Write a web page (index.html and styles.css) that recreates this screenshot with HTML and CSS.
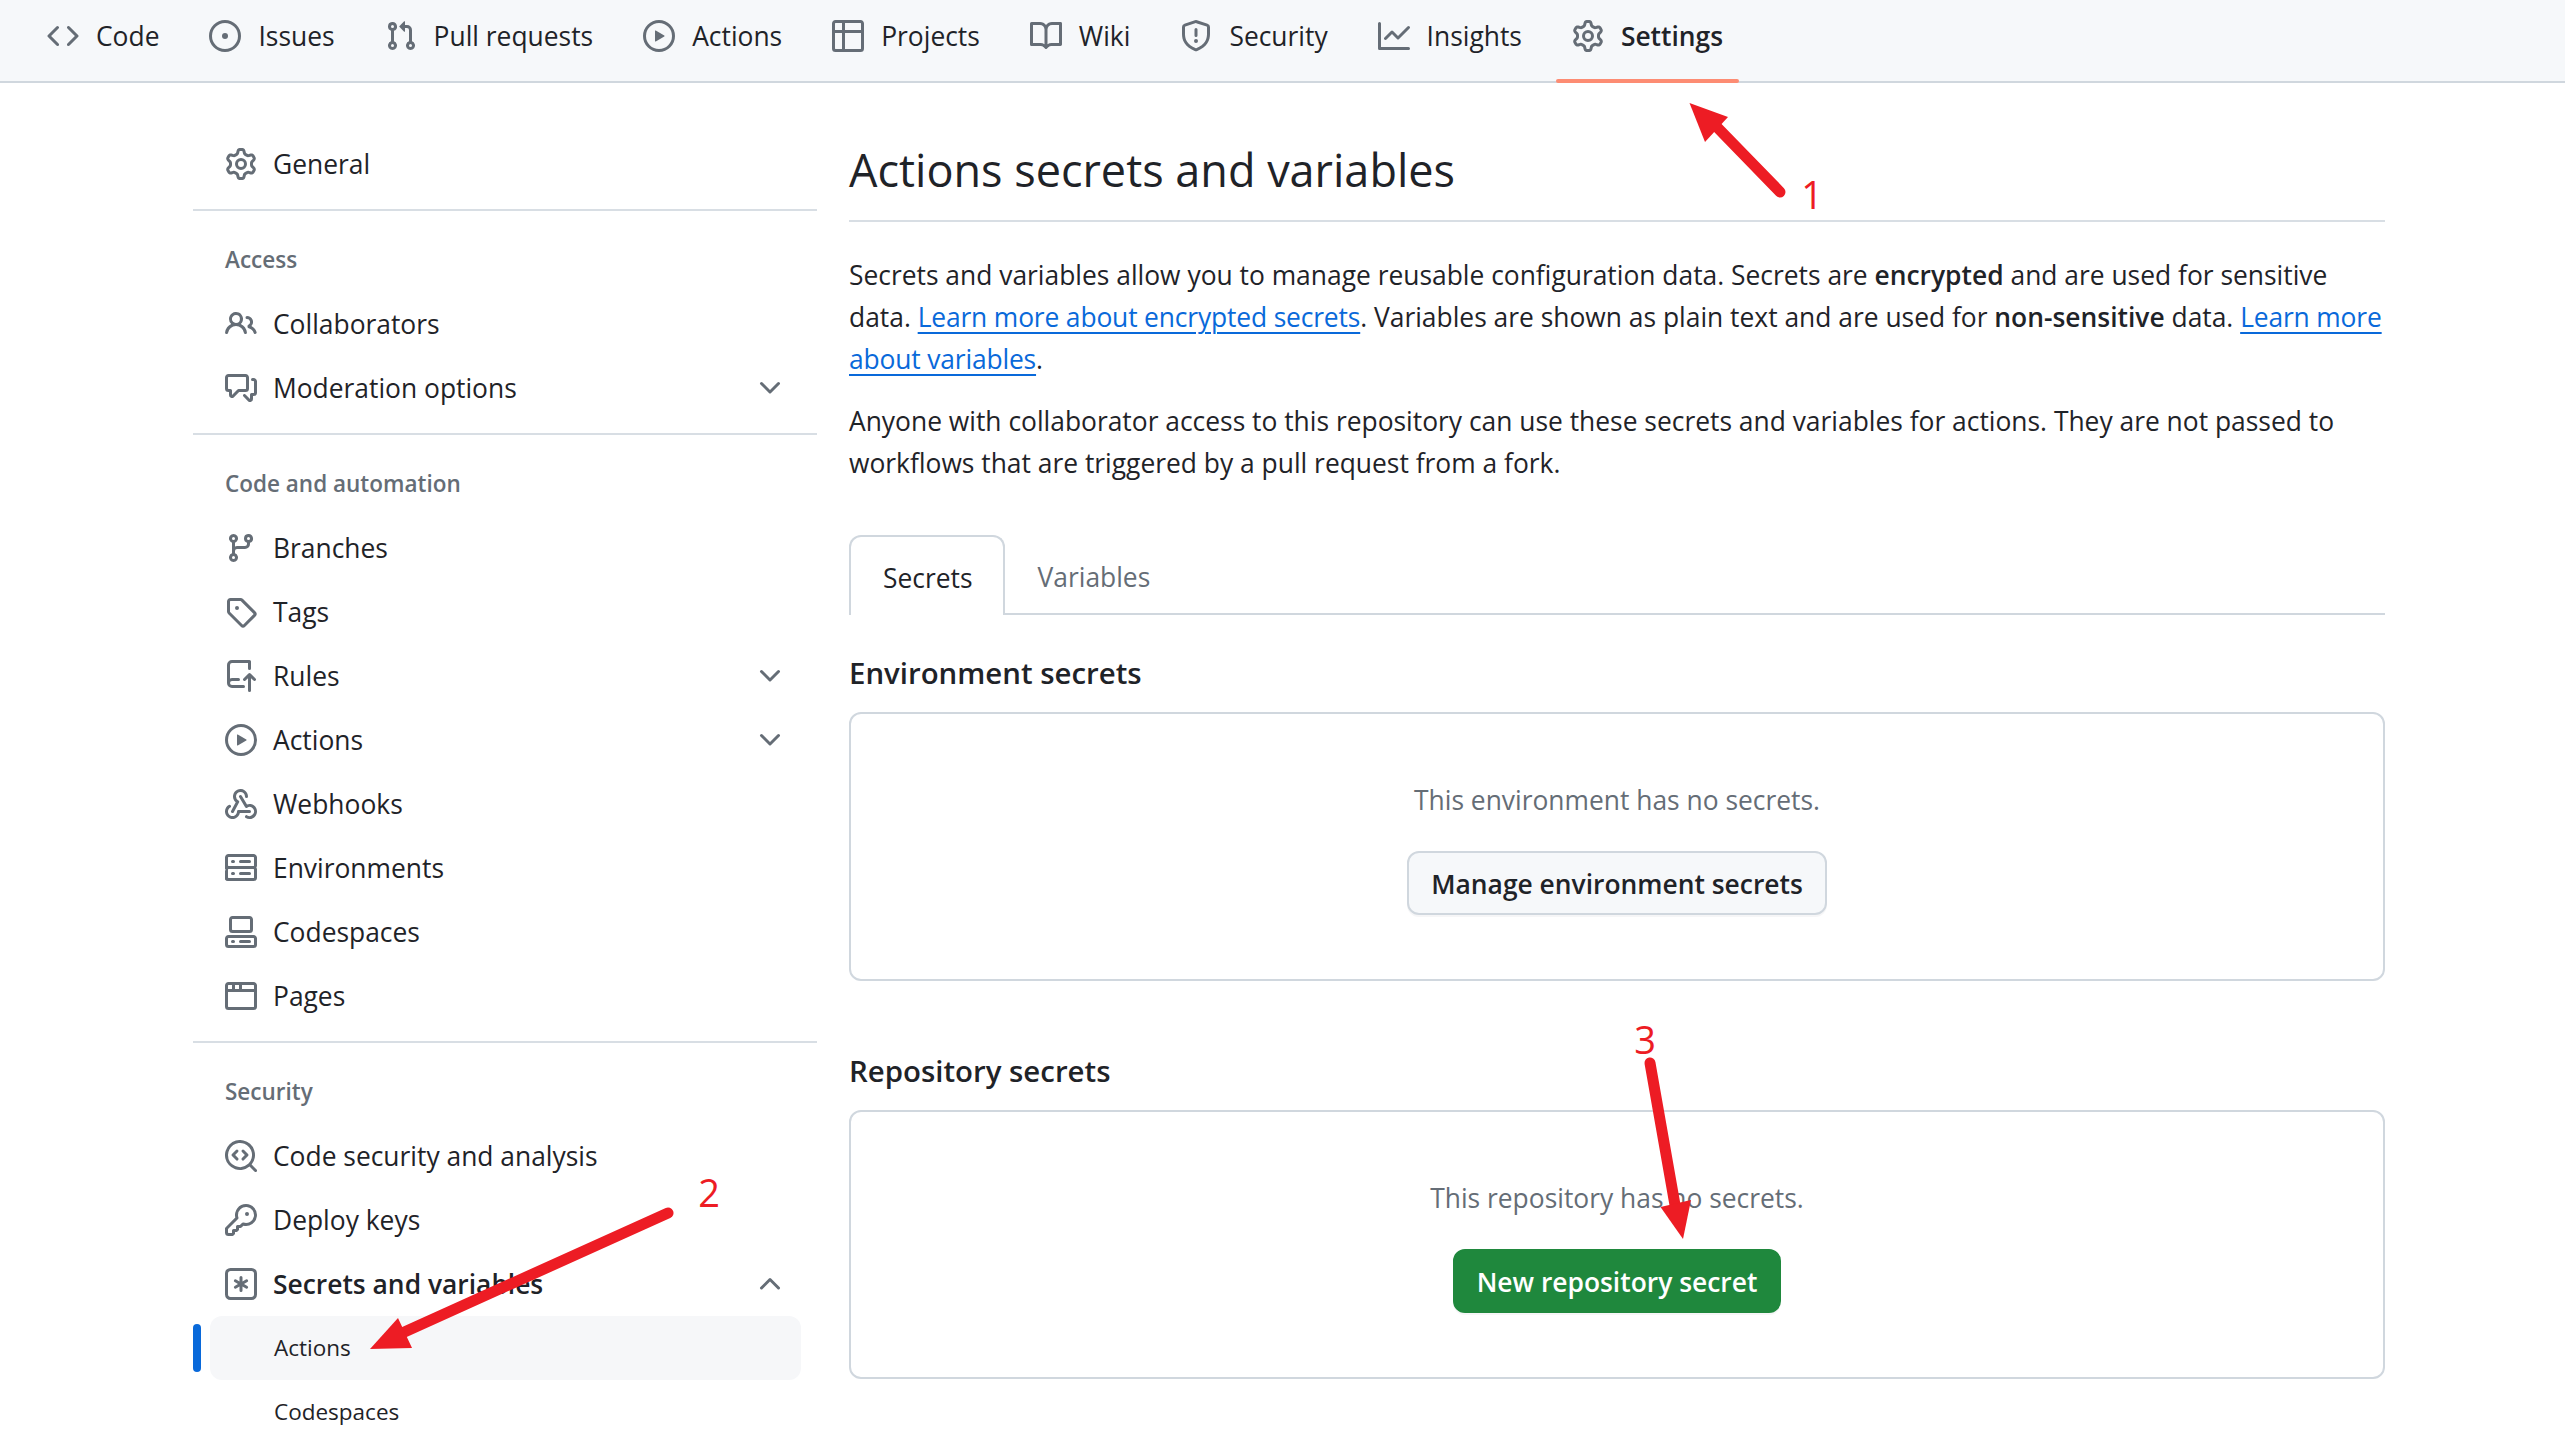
FILE: index.html
```html
<!DOCTYPE html>
<html lang="en">
<head>
<meta charset="utf-8">
<title>Actions secrets and variables</title>
<link rel="stylesheet" href="styles.css">
</head>
<body>
<svg class="defs" aria-hidden="true">
<defs>
<symbol id="i-code" viewBox="0 0 16 16"><path d="m11.28 3.22 4.25 4.25a.75.75 0 0 1 0 1.06l-4.25 4.25a.749.749 0 0 1-1.275-.326.749.749 0 0 1 .215-.734L13.94 8l-3.72-3.72a.749.749 0 0 1 .326-1.275.749.749 0 0 1 .734.215Zm-6.56 0a.751.751 0 0 1 1.042.018.751.751 0 0 1 .018 1.042L2.06 8l3.72 3.72a.749.749 0 0 1-.326 1.275.749.749 0 0 1-.734-.215L.47 8.53a.75.75 0 0 1 0-1.06Z"/></symbol>
<symbol id="i-issue" viewBox="0 0 16 16"><path d="M8 9.5a1.5 1.5 0 1 0 0-3 1.5 1.5 0 0 0 0 3Z"/><path d="M8 0a8 8 0 1 1 0 16A8 8 0 0 1 8 0ZM1.5 8a6.5 6.5 0 1 0 13 0 6.5 6.5 0 0 0-13 0Z"/></symbol>
<symbol id="i-pr" viewBox="0 0 16 16"><path d="M1.5 3.25a2.25 2.25 0 1 1 3 2.122v5.256a2.251 2.251 0 1 1-1.5 0V5.372A2.25 2.25 0 0 1 1.5 3.25Zm5.677-.177L9.573.677A.25.25 0 0 1 10 .854V2.5h1A2.5 2.5 0 0 1 13.5 5v5.628a2.251 2.251 0 1 1-1.5 0V5a1 1 0 0 0-1-1h-1v1.646a.25.25 0 0 1-.427.177L7.177 3.427a.25.25 0 0 1 0-.354ZM3.75 2.5a.75.75 0 1 0 0 1.5.75.75 0 0 0 0-1.5Zm0 9.5a.75.75 0 1 0 0 1.5.75.75 0 0 0 0-1.5Zm8.25.75a.75.75 0 1 0 1.5 0 .75.75 0 0 0-1.5 0Z"/></symbol>
<symbol id="i-play" viewBox="0 0 16 16"><path d="M8 0a8 8 0 1 1 0 16A8 8 0 0 1 8 0ZM1.5 8a6.5 6.5 0 1 0 13 0 6.5 6.5 0 0 0-13 0Zm4.879-2.773 4.264 2.559a.25.25 0 0 1 0 .428l-4.264 2.559A.25.25 0 0 1 6 10.559V5.442a.25.25 0 0 1 .379-.215Z"/></symbol>
<symbol id="i-table" viewBox="0 0 16 16"><path d="M0 1.75C0 .784.784 0 1.75 0h12.5C15.216 0 16 .784 16 1.75v12.5A1.75 1.75 0 0 1 14.25 16H1.75A1.75 1.75 0 0 1 0 14.25ZM6.5 6.5v8h7.75a.25.25 0 0 0 .25-.25V6.5Zm8-1.5V1.75a.25.25 0 0 0-.25-.25H6.5V5Zm-13 1.5v7.75c0 .138.112.25.25.25H5v-8ZM5 5V1.5H1.75a.25.25 0 0 0-.25.25V5Z"/></symbol>
<symbol id="i-book" viewBox="0 0 16 16"><path d="M0 1.75A.75.75 0 0 1 .75 1h4.253c1.227 0 2.317.59 3 1.501A3.743 3.743 0 0 1 11.006 1h4.245a.75.75 0 0 1 .75.75v10.5a.75.75 0 0 1-.75.75h-4.507a2.25 2.25 0 0 0-1.591.659l-.622.621a.75.75 0 0 1-1.06 0l-.622-.621A2.25 2.25 0 0 0 5.258 13H.75a.75.75 0 0 1-.75-.75Zm7.251 10.324.004-5.073-.002-2.253A2.25 2.25 0 0 0 5.003 2.5H1.5v9h3.757a3.75 3.75 0 0 1 1.994.574ZM8.755 4.75l-.004 7.322a3.752 3.752 0 0 1 1.992-.572H14.5v-9h-3.495a2.25 2.25 0 0 0-2.25 2.25Z"/></symbol>
<symbol id="i-shield" viewBox="0 0 16 16"><path d="M7.467.133a1.748 1.748 0 0 1 1.066 0l5.25 1.68A1.75 1.75 0 0 1 15 3.48V7c0 1.566-.32 3.182-1.303 4.682-.983 1.498-2.585 2.813-5.032 3.855a1.697 1.697 0 0 1-1.33 0c-2.447-1.042-4.049-2.357-5.032-3.855C1.32 10.182 1 8.566 1 7V3.48a1.75 1.75 0 0 1 1.217-1.667Zm.61 1.429a.25.25 0 0 0-.153 0l-5.25 1.68a.25.25 0 0 0-.174.238V7c0 1.358.275 2.666 1.057 3.86.784 1.194 2.121 2.34 4.366 3.297a.196.196 0 0 0 .154 0c2.245-.956 3.582-2.104 4.366-3.298C13.225 9.666 13.5 8.36 13.5 7V3.48a.251.251 0 0 0-.174-.237l-5.25-1.68ZM8.75 4.75v3a.75.75 0 0 1-1.5 0v-3a.75.75 0 0 1 1.5 0ZM9 10.5a1 1 0 1 1-2 0 1 1 0 0 1 2 0Z"/></symbol>
<symbol id="i-graph" viewBox="0 0 16 16"><path d="M1.5 1.75V13.5h13.75a.75.75 0 0 1 0 1.5H.75a.75.75 0 0 1-.75-.75V1.75a.75.75 0 0 1 1.5 0Zm14.28 2.53-5.25 5.25a.75.75 0 0 1-1.06 0L7 7.06 4.28 9.78a.751.751 0 0 1-1.042-.018.751.751 0 0 1-.018-1.042l3.25-3.25a.75.75 0 0 1 1.06 0L10 7.94l4.72-4.72a.751.751 0 0 1 1.042.018.751.751 0 0 1 .018 1.042Z"/></symbol>
<symbol id="i-gear" viewBox="0 0 16 16"><path d="M8 0a8.2 8.2 0 0 1 .701.031C9.444.095 9.99.645 10.16 1.29l.288 1.107c.018.066.079.158.212.224.231.114.454.243.668.386.123.082.233.09.299.071l1.103-.303c.644-.176 1.392.021 1.82.63.27.385.506.792.704 1.218.315.675.111 1.422-.364 1.891l-.814.806c-.049.048-.098.147-.088.294.016.257.016.515 0 .772-.01.147.038.246.088.294l.814.806c.475.469.679 1.216.364 1.891a7.977 7.977 0 0 1-.704 1.217c-.428.61-1.176.807-1.82.63l-1.102-.302c-.067-.019-.177-.011-.3.071a5.909 5.909 0 0 1-.668.386c-.133.066-.194.158-.211.224l-.29 1.106c-.168.646-.715 1.196-1.458 1.26a8.006 8.006 0 0 1-1.402 0c-.743-.064-1.289-.614-1.458-1.26l-.289-1.106c-.018-.066-.079-.158-.212-.224a5.738 5.738 0 0 1-.668-.386c-.123-.082-.233-.09-.299-.071l-1.103.303c-.644.176-1.392-.021-1.82-.63a8.12 8.12 0 0 1-.704-1.218c-.315-.675-.111-1.422.363-1.891l.815-.806c.05-.048.098-.147.088-.294a6.214 6.214 0 0 1 0-.772c.01-.147-.038-.246-.088-.294l-.815-.806C.635 6.045.431 5.298.746 4.623a7.92 7.92 0 0 1 .704-1.217c.428-.61 1.176-.807 1.82-.63l1.102.302c.067.019.177.011.3-.071.214-.143.437-.272.668-.386.133-.066.194-.158.211-.224l.29-1.106C6.009.645 6.556.095 7.299.03 7.53.01 7.764 0 8 0Zm-.571 1.525c-.036.003-.108.036-.137.146l-.289 1.105c-.147.561-.549.967-.998 1.189-.173.086-.34.183-.5.29-.417.278-.97.423-1.529.27l-1.103-.303c-.109-.03-.175.016-.195.045-.22.312-.412.644-.573.99-.014.031-.021.11.059.19l.815.806c.411.406.562.957.53 1.456a4.709 4.709 0 0 0 0 .582c.032.499-.119 1.05-.53 1.456l-.815.806c-.081.08-.073.159-.059.19.162.346.353.677.573.989.02.03.085.076.195.046l1.102-.303c.56-.153 1.113-.008 1.53.27.161.107.328.204.501.29.447.222.85.629.997 1.189l.289 1.105c.029.109.101.143.137.146a6.6 6.6 0 0 0 1.142 0c.036-.003.108-.036.137-.146l.289-1.105c.147-.561.549-.967.998-1.189.173-.086.34-.183.5-.29.417-.278.97-.423 1.529-.27l1.103.303c.109.029.175-.016.195-.045.22-.313.411-.644.573-.99.014-.031.021-.11-.059-.19l-.815-.806c-.411-.406-.562-.957-.53-1.456a4.709 4.709 0 0 0 0-.582c-.032-.499.119-1.05.53-1.456l.815-.806c.081-.08.073-.159.059-.19a6.464 6.464 0 0 0-.573-.989c-.02-.03-.085-.076-.195-.046l-1.102.303c-.56.153-1.113.008-1.53-.27a4.44 4.44 0 0 0-.501-.29c-.447-.222-.85-.629-.997-1.189l-.289-1.105c-.029-.11-.101-.143-.137-.146a6.6 6.6 0 0 0-1.142 0ZM11 8a3 3 0 1 1-6 0 3 3 0 0 1 6 0ZM9.5 8a1.5 1.5 0 1 0-3.001.001A1.5 1.5 0 0 0 9.5 8Z"/></symbol>
<symbol id="i-people" viewBox="0 0 16 16"><path d="M2 5.5a3.5 3.5 0 1 1 5.898 2.549 5.508 5.508 0 0 1 3.034 4.084.75.75 0 1 1-1.482.235 4 4 0 0 0-7.9 0 .75.75 0 0 1-1.482-.236A5.507 5.507 0 0 1 3.102 8.05 3.493 3.493 0 0 1 2 5.5ZM11 4a3.001 3.001 0 0 1 2.22 5.018 5.01 5.01 0 0 1 2.56 3.012.749.749 0 0 1-.885.954.752.752 0 0 1-.549-.514 3.507 3.507 0 0 0-2.522-2.372.75.75 0 0 1-.574-.73v-.352a.75.75 0 0 1 .416-.672A1.5 1.5 0 0 0 11 5.5.75.75 0 0 1 11 4Zm-5.5-.5a2 2 0 1 0-.001 3.999A2 2 0 0 0 5.5 3.5Z"/></symbol>
<symbol id="i-comment" viewBox="0 0 16 16"><path d="M1.75 1h8.5c.966 0 1.75.784 1.75 1.75v5.5A1.75 1.75 0 0 1 10.25 10H7.061l-2.574 2.573A1.458 1.458 0 0 1 2 11.543V10h-.25A1.75 1.75 0 0 1 0 8.25v-5.5C0 1.784.784 1 1.75 1ZM1.5 2.75v5.5c0 .138.112.25.25.25h1a.75.75 0 0 1 .75.75v2.19l2.72-2.72a.749.749 0 0 1 .53-.22h3.5a.25.25 0 0 0 .25-.25v-5.5a.25.25 0 0 0-.25-.25h-8.5a.25.25 0 0 0-.25.25Zm13 2a.25.25 0 0 0-.25-.25h-.5a.75.75 0 0 1 0-1.5h.5c.966 0 1.75.784 1.75 1.75v5.5A1.75 1.75 0 0 1 14.25 12H14v1.543a1.458 1.458 0 0 1-2.487 1.03L9.22 12.28a.749.749 0 0 1 .326-1.275.749.749 0 0 1 .734.215l2.22 2.22v-2.19a.75.75 0 0 1 .75-.75h1a.25.25 0 0 0 .25-.25Z"/></symbol>
<symbol id="i-branch" viewBox="0 0 16 16"><path d="M9.5 3.25a2.25 2.25 0 1 1 3 2.122V6A2.5 2.5 0 0 1 10 8.5H6a1 1 0 0 0-1 1v1.128a2.251 2.251 0 1 1-1.5 0V5.372a2.25 2.25 0 1 1 1.5 0v1.836A2.493 2.493 0 0 1 6 7h4a1 1 0 0 0 1-1v-.628A2.25 2.25 0 0 1 9.5 3.25Zm-6 0a.75.75 0 1 0 1.5 0 .75.75 0 0 0-1.5 0Zm8.25-.75a.75.75 0 1 0 0 1.5.75.75 0 0 0 0-1.5ZM4.25 12a.75.75 0 1 0 0 1.5.75.75 0 0 0 0-1.5Z"/></symbol>
<symbol id="i-tag" viewBox="0 0 16 16"><path d="M1 7.775V2.75C1 1.784 1.784 1 2.75 1h5.025c.464 0 .91.184 1.238.513l6.25 6.25a1.75 1.75 0 0 1 0 2.474l-5.026 5.026a1.75 1.75 0 0 1-2.474 0l-6.25-6.25A1.75 1.75 0 0 1 1 7.775Zm1.5 0c0 .066.026.13.073.177l6.25 6.25a.25.25 0 0 0 .354 0l5.025-5.025a.25.25 0 0 0 0-.354l-6.25-6.25a.25.25 0 0 0-.177-.073H2.75a.25.25 0 0 0-.25.25ZM6 5a1 1 0 1 1 0 2 1 1 0 0 1 0-2Z"/></symbol>
<symbol id="i-rules" viewBox="0 0 16 16"><path d="M1 2.5A2.5 2.5 0 0 1 3.5 0h8.75a.75.75 0 0 1 .75.75v3.5a.75.75 0 0 1-1.5 0V1.5h-8a1 1 0 0 0-1 1v6.708A2.493 2.493 0 0 1 3.5 9h3.25a.75.75 0 0 1 0 1.5H3.5a1 1 0 0 0 0 2h5.75a.75.75 0 0 1 0 1.5H3.5A2.5 2.5 0 0 1 1 11.5Zm13.23 7.79h-.001l-1.224-1.224v6.184a.75.75 0 0 1-1.5 0V9.066L10.28 10.29a.75.75 0 0 1-1.06-1.061l2.505-2.504a.75.75 0 0 1 1.06 0L15.29 9.23a.751.751 0 0 1-.018 1.042.751.751 0 0 1-1.042.018Z"/></symbol>
<symbol id="i-webhook" viewBox="0 0 16 16"><path d="M5.5 4.25a2.25 2.25 0 0 1 4.5 0 .75.75 0 0 0 1.5 0 3.75 3.75 0 1 0-6.14 2.889l-2.272 4.258a.75.75 0 0 0 1.324.706L7 7.25a.75.75 0 0 0-.309-1.015A2.25 2.25 0 0 1 5.5 4.25Z"/><path d="M7.364 3.607a.75.75 0 0 1 1.03.257l2.608 4.349a3.75 3.75 0 1 1-.628 6.785.75.75 0 0 1 .752-1.299 2.25 2.25 0 1 0-.033-3.88.75.75 0 0 1-1.03-.256L7.107 4.636a.75.75 0 0 1 .257-1.03Z"/><path d="M2.9 8.776A.75.75 0 0 1 2.625 9.8 2.25 2.25 0 1 0 6 11.75a.75.75 0 0 1 .75-.751h5.5a.75.75 0 0 1 0 1.5H7.425a3.751 3.751 0 1 1-5.55-3.998.75.75 0 0 1 1.024.274Z"/></symbol>
<symbol id="i-server" viewBox="0 0 16 16"><path d="M1.75 1h12.5c.966 0 1.75.784 1.75 1.75v4c0 .372-.116.717-.314 1 .198.283.314.628.314 1v4a1.75 1.75 0 0 1-1.75 1.75H1.75A1.75 1.75 0 0 1 0 13.75v-4c0-.372.116-.717.314-1A1.739 1.739 0 0 1 0 6.75v-4C0 1.784.784 1 1.75 1ZM1.5 2.75v4c0 .138.112.25.25.25h12.5a.25.25 0 0 0 .25-.25v-4a.25.25 0 0 0-.25-.25H1.75a.25.25 0 0 0-.25.25Zm.25 5.75a.25.25 0 0 0-.25.25v4c0 .138.112.25.25.25h12.5a.25.25 0 0 0 .25-.25v-4a.25.25 0 0 0-.25-.25ZM7 4.75A.75.75 0 0 1 7.75 4h4.5a.75.75 0 0 1 0 1.5h-4.5A.75.75 0 0 1 7 4.75ZM7.75 10h4.5a.75.75 0 0 1 0 1.5h-4.5a.75.75 0 0 1 0-1.5ZM3 4.75A.75.75 0 0 1 3.75 4h.5a.75.75 0 0 1 0 1.5h-.5A.75.75 0 0 1 3 4.75ZM3.75 10h.5a.75.75 0 0 1 0 1.5h-.5a.75.75 0 0 1 0-1.5Z"/></symbol>
<symbol id="i-codespaces" viewBox="0 0 16 16"><path d="M0 11.25c0-.966.784-1.75 1.75-1.75h12.5c.966 0 1.75.784 1.75 1.75v3A1.75 1.75 0 0 1 14.25 16H1.75A1.75 1.75 0 0 1 0 14.25Zm2-9.5C2 .784 2.784 0 3.75 0h8.5C13.216 0 14 .784 14 1.75v5a1.75 1.75 0 0 1-1.75 1.75h-8.5A1.75 1.75 0 0 1 2 6.75Zm1.75-.25a.25.25 0 0 0-.25.25v5c0 .138.112.25.25.25h8.5a.25.25 0 0 0 .25-.25v-5a.25.25 0 0 0-.25-.25Zm-2 9.5a.25.25 0 0 0-.25.25v3c0 .138.112.25.25.25h12.5a.25.25 0 0 0 .25-.25v-3a.25.25 0 0 0-.25-.25Z"/><path d="M7 12.75a.75.75 0 0 1 .75-.75h4.5a.75.75 0 0 1 0 1.5h-4.5a.75.75 0 0 1-.75-.75Zm-4 0a.75.75 0 0 1 .75-.75h.5a.75.75 0 0 1 0 1.5h-.5a.75.75 0 0 1-.75-.75Z"/></symbol>
<symbol id="i-browser" viewBox="0 0 16 16"><path d="M0 2.75C0 1.784.784 1 1.75 1h12.5c.966 0 1.75.784 1.75 1.75v10.5A1.75 1.75 0 0 1 14.25 15H1.75A1.75 1.75 0 0 1 0 13.25ZM14.5 6h-13v7.25c0 .138.112.25.25.25h12.5a.25.25 0 0 0 .25-.25Zm-6-3.5v2h6V2.75a.25.25 0 0 0-.25-.25ZM5 2.5v2h2v-2Zm-3.25 0a.25.25 0 0 0-.25.25V4.5h2v-2Z"/></symbol>
<symbol id="i-codescan" viewBox="0 0 16 16"><path d="M8.47 4.97a.75.75 0 0 0 0 1.06L9.94 7.5 8.47 8.97a.75.75 0 1 0 1.06 1.06l2-2a.75.75 0 0 0 0-1.06l-2-2a.75.75 0 0 0-1.06 0ZM6.53 6.03a.75.75 0 0 0-1.06-1.06l-2 2a.75.75 0 0 0 0 1.06l2 2a.75.75 0 1 0 1.06-1.06L5.06 7.5l1.47-1.47Z"/><path d="M12.246 13.307a7.501 7.501 0 1 1 1.06-1.06l2.474 2.473a.749.749 0 0 1-.326 1.275.749.749 0 0 1-.734-.215ZM1.5 7.5a6.002 6.002 0 0 0 3.608 5.504 6.002 6.002 0 0 0 6.486-1.117.748.748 0 0 1 .292-.293A6 6 0 1 0 1.5 7.5Z"/></symbol>
<symbol id="i-key" viewBox="0 0 16 16"><path d="M10.5 0a5.499 5.499 0 1 1-1.288 10.848l-.932.932a.749.749 0 0 1-.53.22H7v.75a.749.749 0 0 1-.22.53l-.5.5a.749.749 0 0 1-.53.22H5v.75a.749.749 0 0 1-.22.53l-.5.5a.749.749 0 0 1-.53.22h-2A1.75 1.75 0 0 1 0 14.25v-2c0-.199.079-.389.22-.53l4.932-4.932A5.5 5.5 0 0 1 10.5 0Zm-4 5.5c-.001.431.069.86.205 1.269a.75.75 0 0 1-.181.768L1.5 12.56v1.69c0 .138.112.25.25.25h1.69l.06-.06v-1.19a.75.75 0 0 1 .75-.75h1.19l.06-.06v-1.19a.75.75 0 0 1 .75-.75h1.19l1.023-1.025a.75.75 0 0 1 .768-.18A4 4 0 1 0 6.5 5.5ZM11 6a1 1 0 1 1 0-2 1 1 0 0 1 0 2Z"/></symbol>
<symbol id="i-asterisk" viewBox="0 0 16 16"><path d="M0 2.75A2.75 2.75 0 0 1 2.75 0h10.5A2.75 2.75 0 0 1 16 2.75v10.5A2.75 2.75 0 0 1 13.25 16H2.75A2.75 2.75 0 0 1 0 13.25ZM2.75 1.5c-.69 0-1.25.56-1.25 1.25v10.5c0 .69.56 1.25 1.25 1.25h10.5c.69 0 1.25-.56 1.25-1.25V2.75c0-.69-.56-1.25-1.25-1.25Z"/><path d="M8 4a.75.75 0 0 1 .75.75V6.7l1.69-.975a.75.75 0 0 1 .75 1.3L9.5 8l1.69.975a.75.75 0 0 1-.75 1.3L8.75 9.3v1.95a.75.75 0 0 1-1.5 0V9.3l-1.69.975a.75.75 0 0 1-.75-1.3L6.5 8l-1.69-.975a.75.75 0 0 1 .75-1.3L7.25 6.7V4.75A.75.75 0 0 1 8 4Z"/></symbol>
<symbol id="i-down" viewBox="0 0 16 16"><path d="M12.78 5.22a.749.749 0 0 1 0 1.06l-4.25 4.25a.749.749 0 0 1-1.06 0L3.22 6.28a.749.749 0 1 1 1.06-1.06L8 8.939l3.72-3.719a.749.749 0 0 1 1.06 0Z"/></symbol>
<symbol id="i-up" viewBox="0 0 16 16"><path d="M3.22 10.53a.749.749 0 0 1 0-1.06l4.25-4.25a.749.749 0 0 1 1.06 0l4.25 4.25a.749.749 0 1 1-1.06 1.06L8 6.811 4.28 10.53a.749.749 0 0 1-1.06 0Z"/></symbol>
</defs>
</svg>

<nav class="repo-nav">
  <a class="nav-item"><svg class="icon"><use href="#i-code"/></svg><span>Code</span></a>
  <a class="nav-item"><svg class="icon"><use href="#i-issue"/></svg><span>Issues</span></a>
  <a class="nav-item"><svg class="icon"><use href="#i-pr"/></svg><span>Pull requests</span></a>
  <a class="nav-item"><svg class="icon"><use href="#i-play"/></svg><span>Actions</span></a>
  <a class="nav-item"><svg class="icon"><use href="#i-table"/></svg><span>Projects</span></a>
  <a class="nav-item"><svg class="icon"><use href="#i-book"/></svg><span>Wiki</span></a>
  <a class="nav-item"><svg class="icon"><use href="#i-shield"/></svg><span>Security</span></a>
  <a class="nav-item"><svg class="icon"><use href="#i-graph"/></svg><span>Insights</span></a>
  <a class="nav-item nav-item-active"><svg class="icon"><use href="#i-gear"/></svg><span>Settings</span></a>
</nav>

<div class="layout">
  <aside class="sidebar">
    <a class="row"><svg class="icon"><use href="#i-gear"/></svg><span>General</span></a>
    <hr class="divider">
    <h2 class="side-heading">Access</h2>
    <a class="row"><svg class="icon"><use href="#i-people"/></svg><span>Collaborators</span></a>
    <a class="row"><svg class="icon"><use href="#i-comment"/></svg><span>Moderation options</span><svg class="icon chev"><use href="#i-down"/></svg></a>
    <hr class="divider">
    <h2 class="side-heading">Code and automation</h2>
    <a class="row"><svg class="icon"><use href="#i-branch"/></svg><span>Branches</span></a>
    <a class="row"><svg class="icon"><use href="#i-tag"/></svg><span>Tags</span></a>
    <a class="row"><svg class="icon"><use href="#i-rules"/></svg><span>Rules</span><svg class="icon chev"><use href="#i-down"/></svg></a>
    <a class="row"><svg class="icon"><use href="#i-play"/></svg><span>Actions</span><svg class="icon chev"><use href="#i-down"/></svg></a>
    <a class="row"><svg class="icon"><use href="#i-webhook"/></svg><span>Webhooks</span></a>
    <a class="row"><svg class="icon"><use href="#i-server"/></svg><span>Environments</span></a>
    <a class="row"><svg class="icon"><use href="#i-codespaces"/></svg><span>Codespaces</span></a>
    <a class="row"><svg class="icon"><use href="#i-browser"/></svg><span>Pages</span></a>
    <hr class="divider">
    <h2 class="side-heading">Security</h2>
    <a class="row"><svg class="icon"><use href="#i-codescan"/></svg><span>Code security and analysis</span></a>
    <a class="row"><svg class="icon"><use href="#i-key"/></svg><span>Deploy keys</span></a>
    <a class="row row-open"><svg class="icon"><use href="#i-asterisk"/></svg><span>Secrets and variables</span><svg class="icon chev"><use href="#i-up"/></svg></a>
    <a class="subrow subrow-active"><span>Actions</span></a>
    <a class="subrow"><span>Codespaces</span></a>
  </aside>

  <main class="content">
    <h1 class="title">Actions secrets and variables</h1>
    <p class="lead">Secrets and variables allow you to manage reusable configuration data. Secrets are <strong class="strong">encrypted</strong> and are used for sensitive<br>data. <a class="link">Learn more about encrypted secrets</a>. Variables are shown as plain text and are used for <strong class="strong">non-sensitive</strong> data. <a class="link">Learn more</a><br><a class="link">about variables</a>.</p>
    <p class="lead lead-second">Anyone with collaborator access to this repository can use these secrets and variables for actions. They are not passed to<br>workflows that are triggered by a pull request from a fork.</p>
    <div class="tabs">
      <a class="tab tab-active">Secrets</a>
      <a class="tab">Variables</a>
    </div>
    <h3 class="section-title">Environment secrets</h3>
    <section class="blank">
      <p class="blank-text">This environment has no secrets.</p>
      <a class="btn">Manage environment secrets</a>
    </section>
    <h3 class="section-title section-title-next">Repository secrets</h3>
    <section class="blank">
      <p class="blank-text">This repository has no secrets.</p>
      <a class="btn btn-primary">New repository secret</a>
    </section>
  </main>
</div>

<svg class="annotations" viewBox="0 0 2565 1446" aria-hidden="true">
  <line class="arrow-line" x1="1780" y1="192" x2="1712" y2="122"/>
  <polygon class="arrow-head" points="1689.5,103 1728,117 1705,142"/>
  <line class="arrow-line" x1="668" y1="1213" x2="400" y2="1334"/>
  <polygon class="arrow-head" points="370,1349 398,1318 412,1348"/>
  <line class="arrow-line" x1="1650" y1="1063" x2="1675" y2="1205"/>
  <polygon class="arrow-head" points="1683,1239 1660.5,1207 1691,1200"/>
  <text class="arrow-num" x="1812" y="209">1</text>
  <text class="arrow-num" x="709" y="1207">2</text>
  <text class="arrow-num" x="1645" y="1054">3</text>
</svg>
</body>
</html>
```

FILE: styles.css
```css
* { box-sizing: border-box; }
html, body { margin: 0; padding: 0; }
body {
  position: relative;
  width: 2565px;
  height: 1446px;
  overflow: hidden;
  background: #fff;
  color: #1f2328;
  font-family: "Open Sans", "Noto Sans", sans-serif;
  font-size: 26.4px;
  line-height: 42px;
}
.defs { position: absolute; width: 0; height: 0; }
.icon { width: 32px; height: 32px; fill: #656d76; flex: none; }

.repo-nav {
  display: flex;
  align-items: flex-start;
  gap: 18px;
  height: 83px;
  padding-left: 31px;
  background: #f6f8fa;
  border-bottom: 2px solid #d0d7de;
}
.nav-item { position: relative; display: flex; align-items: center; gap: 17px; padding: 0 16px; height: 71px; }
.nav-item-active { font-weight: 600; }
.nav-item-active::after {
  content: "";
  position: absolute;
  left: 0; right: 0; bottom: -12px;
  height: 4px;
  border-radius: 2px;
  background: #fd8c73;
}

.layout { display: flex; gap: 32px; padding: 49px 0 0 193px; }
.sidebar { width: 624px; flex: none; }
.row { display: flex; align-items: center; gap: 16px; height: 64px; padding-left: 32px; }
.row-open { font-weight: 600; }
.chev { margin-left: auto; margin-right: 31px; }
.divider { height: 2px; margin: 13px 0 0; border: 0; background: #d8dee4; }
.side-heading { margin: 33px 0 16px 32px; font-size: 22.5px; line-height: 32px; font-weight: 600; color: #656d76; }
.subrow { position: relative; display: flex; align-items: center; height: 64px; margin: 0 16px 0 17px; padding-left: 64px; font-size: 22.5px; border-radius: 12px; }
.subrow-active { background: #f6f7f9; }
.subrow-active::before {
  content: "";
  position: absolute;
  left: -17px; top: 8px; bottom: 8px;
  width: 8px;
  border-radius: 6px;
  background: #0969da;
}

.content { width: 1536px; flex: none; margin-top: -1px; }
.title { margin: 0; padding-bottom: 11px; font-size: 45px; line-height: 78px; font-weight: 400; border-bottom: 2px solid #d8dee4; }
.lead { margin: 32px 0 0; white-space: nowrap; }
.lead-second { margin-top: 20px; }
.strong { font-weight: 600; }
.link { color: #0969da; letter-spacing: -0.15px; text-decoration: underline; text-decoration-thickness: 2px; text-underline-offset: 5px; }
.tabs { display: flex; height: 80px; margin-top: 51px; border-bottom: 2px solid #d0d7de; }
.tab { display: flex; align-items: center; height: 80px; padding: 3px 33px 0; color: #656d76; }
.tab-active { color: #1f2328; background: #fff; border: 2px solid #d0d7de; border-bottom: 0; border-radius: 12px 12px 0 0; padding: 3px 30px 0 32px; }
.section-title { margin: 37px 0 18px; font-size: 29.4px; line-height: 42px; font-weight: 600; }
.section-title-next { margin-top: 69px; }
.blank { display: flex; flex-direction: column; align-items: center; padding: 65px 64px 64px; border: 2px solid #d0d7de; border-radius: 12px; }
.blank-text { margin: 0 0 30px; color: #656d76; }
.btn {
  display: flex;
  align-items: center;
  height: 64px;
  padding: 2px 22px 0;
  font-weight: 600;
  background: #f6f8fa;
  border: 2px solid #d0d7de;
  border-radius: 12px;
  box-shadow: 0 2px 0 rgba(31,35,40,.04);
}
.btn-primary { color: #fff; background: #1f883d; border-color: #1f883d; }

.annotations { position: absolute; left: 0; top: 0; width: 2565px; height: 1446px; pointer-events: none; }
.arrow-line { stroke: #ed1c24; stroke-width: 11; stroke-linecap: round; }
.arrow-head { fill: #ed1c24; }
.arrow-num { fill: #ed1c24; font-size: 38px; text-anchor: middle; font-weight: 400; }
```
